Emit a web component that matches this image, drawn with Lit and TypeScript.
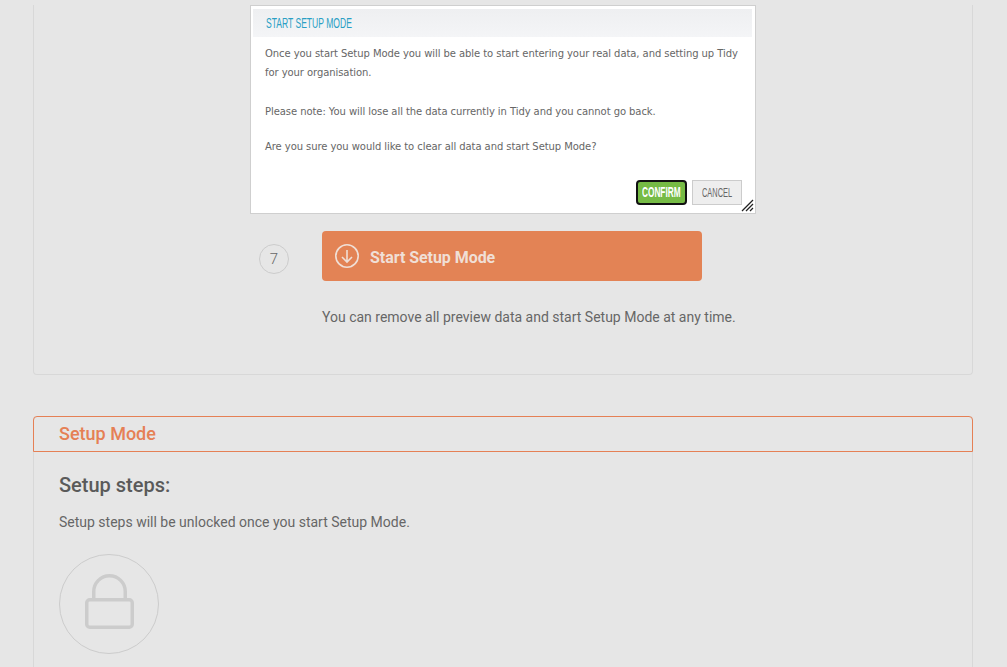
import { LitElement, html, css } from "lit";
import { customElement } from "lit/decorators.js";

@customElement("app-root")
export class AppRoot extends LitElement {
  static styles = css`
    :host { display: block; height: 667px; overflow: hidden; background: #e6e6e6; font-family: Roboto, sans-serif; color: #666; }
    .page { padding: 5px 34px 0 33px; display: flex; flex-direction: column; }
    .card1 { box-sizing: border-box; height: 370px; border: 1px solid #d8d8d8; border-top: none; border-radius: 0 0 4px 4px; display: flex; flex-direction: column; }
    .dialog { box-sizing: border-box; width: 506px; height: 209px; margin-left: 216px; background: #fff; border: 1px solid #cfcfcf; padding: 3px 3px 0 2px; display: flex; flex-direction: column; position: relative; }
    .dtitle { height: 28px; background: linear-gradient(#eeeff1, #f4f5f7); font: 15px/28px "Liberation Sans", sans-serif; color: #2a9fc4; padding-left: 13px; }
    .narrow { display: inline-block; transform-origin: left center; transform: scaleX(0.57); white-space: nowrap; }
    .dbody { padding: 7px 10px 0 12px; font: 10px/19px "DejaVu Sans", sans-serif; letter-spacing: -0.07px; color: #666; flex: 1; }
    .dbody p { margin: 0 0 16px; white-space: nowrap; }
    .dbody p:first-child { margin-bottom: 20px; }
    .actions { display: flex; justify-content: flex-end; gap: 5px; padding: 0 10px 8px 0; align-items: center; }
    .confirm { box-sizing: border-box; width: 51px; height: 25px; background: #76bb45; border: 2px solid #111; border-radius: 4px; color: #fff; font: bold 14px/21px "Liberation Sans", sans-serif; padding-left: 4px; overflow: hidden; }
    .confirm .narrow { transform: scaleX(0.59); }
    .cancel { box-sizing: border-box; width: 50px; height: 25px; background: #eee; border: 1px solid #ccc; color: #666; font: 13px/23px "Liberation Sans", sans-serif; padding-left: 9px; overflow: hidden; }
    .cancel .narrow { transform: scaleX(0.57); }
    .grip { position: absolute; right: 1px; bottom: 1px; width: 13px; height: 13px; }
    .row { display: flex; align-items: center; margin-top: 17px; }
    .step { box-sizing: border-box; width: 30px; height: 30px; margin: 6px 0 0 225px; border: 1px solid #ccc; border-radius: 50%; display: flex; align-items: center; justify-content: center; font-size: 15px; font-weight: 300; color: #666; }
    .btn { box-sizing: border-box; width: 380px; height: 50px; margin-left: 33px; background: #e38355; border-radius: 4px; display: flex; align-items: center; padding-left: 12px; gap: 10px; color: #f0dfd6; font-size: 16px; font-weight: 700; letter-spacing: -0.05px; }
    .btn span { position: relative; top: 1px; }
    .note { margin: 26px 0 0 288px; font-size: 14px; line-height: 20px; color: #666; }
    .card2 { margin-top: 41px; border: 1px solid #d8d8d8; border-radius: 4px 4px 0 0; height: 300px; box-sizing: border-box; border-top: none; display: flex; flex-direction: column; }
    .chead { box-sizing: border-box; height: 36px; margin: 0 -1px; border: 1px solid #e58055; border-radius: 4px 4px 0 0; color: #e58055; font-size: 18px; font-weight: 500; line-height: 34px; padding-left: 25px; }
    .cbody { padding: 19px 25px 0; }
    h2 { margin: 0; font-size: 20px; font-weight: 500; line-height: 28px; color: #5a5a5a; }
    .cbody p { margin: 13px 0 0; font-size: 14px; line-height: 20px; color: #666; }
    .lock { box-sizing: border-box; width: 100px; height: 100px; margin-top: 22px; border: 1px solid #ccc; border-radius: 50%; display: flex; align-items: center; justify-content: center; }
  `;

  render() {
    return html`<div class="page">
      <div class="card1">
        <div class="dialog">
          <div class="dtitle"><span class="narrow">START SETUP MODE</span></div>
          <div class="dbody">
            <p>Once you start Setup Mode you will be able to start entering your real data, and setting up Tidy<br />for your organisation.</p>
            <p>Please note: You will lose all the data currently in Tidy and you cannot go back.</p>
            <p>Are you sure you would like to clear all data and start Setup Mode?</p>
          </div>
          <div class="actions">
            <div class="confirm"><span class="narrow">CONFIRM</span></div>
            <div class="cancel"><span class="narrow">CANCEL</span></div>
          </div>
          <svg class="grip" viewBox="0 0 13 13" stroke="#222" stroke-width="1.3"><path d="M1 12 12 1M5 12 12 5M9 12l3-3"/></svg>
        </div>
        <div class="row">
          <div class="step">7</div>
          <div class="btn">
            <svg width="26" height="26" viewBox="0 0 26 26" fill="none" stroke="#f0dfd6" stroke-width="1.6"><circle cx="13" cy="13" r="11.2"/><path d="M13 7v12M8 14l5 5 5-5"/></svg>
            <span>Start Setup Mode</span>
          </div>
        </div>
        <div class="note">You can remove all preview data and start Setup Mode at any time.</div>
      </div>
      <div class="card2">
        <div class="chead">Setup Mode</div>
        <div class="cbody">
          <h2>Setup steps:</h2>
          <p>Setup steps will be unlocked once you start Setup Mode.</p>
          <div class="lock">
            <svg width="49" height="60" viewBox="0 0 49 60" fill="none" stroke="#ccc" stroke-width="3.5"><rect x="1.75" y="25.75" width="45.5" height="27.5" rx="3"/><path d="M8.75 24V17.5a15.75 15.75 0 0 1 31.5 0V24"/></svg>
          </div>
        </div>
      </div>
    </div>`;
  }
}
